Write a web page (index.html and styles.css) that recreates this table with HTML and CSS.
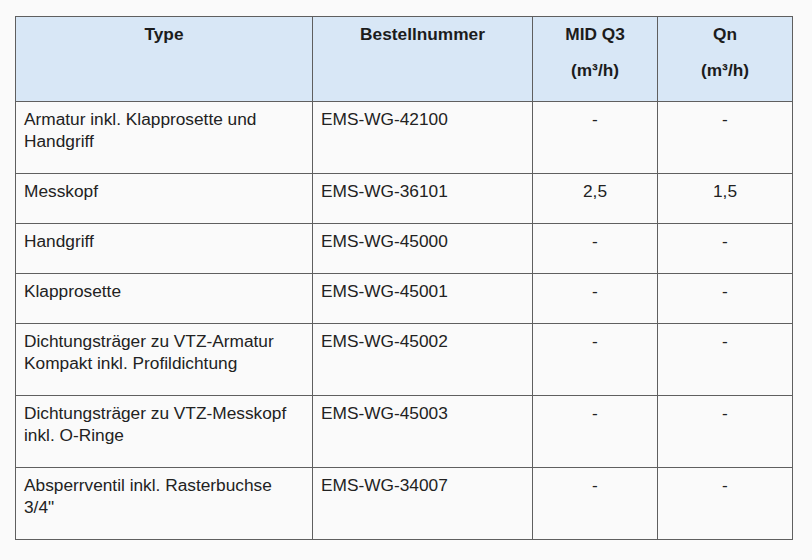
FILE: index.html
```html
<!DOCTYPE html>
<html lang="de">
<head>
<meta charset="utf-8">
<title>Ersatzteile</title>
<link rel="stylesheet" href="styles.css">
</head>
<body>
<table class="parts">
  <colgroup>
    <col class="c-type">
    <col class="c-nr">
    <col class="c-q3">
    <col class="c-qn">
  </colgroup>
  <thead>
    <tr>
      <th><p>Type</p></th>
      <th><p>Bestellnummer</p></th>
      <th><p>MID Q3</p><p>(m³/h)</p></th>
      <th><p>Qn</p><p>(m³/h)</p></th>
    </tr>
  </thead>
  <tbody>
    <tr>
      <td><p>Armatur inkl. Klapprosette und Handgriff</p></td>
      <td><p>EMS-WG-42100</p></td>
      <td class="num"><p>-</p></td>
      <td class="num"><p>-</p></td>
    </tr>
    <tr>
      <td><p>Messkopf</p></td>
      <td><p>EMS-WG-36101</p></td>
      <td class="num"><p>2,5</p></td>
      <td class="num"><p>1,5</p></td>
    </tr>
    <tr>
      <td><p>Handgriff</p></td>
      <td><p>EMS-WG-45000</p></td>
      <td class="num"><p>-</p></td>
      <td class="num"><p>-</p></td>
    </tr>
    <tr>
      <td><p>Klapprosette</p></td>
      <td><p>EMS-WG-45001</p></td>
      <td class="num"><p>-</p></td>
      <td class="num"><p>-</p></td>
    </tr>
    <tr>
      <td><p>Dichtungsträger zu VTZ-Armatur Kompakt inkl. Profildichtung</p></td>
      <td><p>EMS-WG-45002</p></td>
      <td class="num"><p>-</p></td>
      <td class="num"><p>-</p></td>
    </tr>
    <tr>
      <td><p>Dichtungsträger zu VTZ-Messkopf inkl. O-Ringe</p></td>
      <td><p>EMS-WG-45003</p></td>
      <td class="num"><p>-</p></td>
      <td class="num"><p>-</p></td>
    </tr>
    <tr>
      <td><p>Absperrventil inkl. Rasterbuchse 3/4"</p></td>
      <td><p>EMS-WG-34007</p></td>
      <td class="num"><p>-</p></td>
      <td class="num"><p>-</p></td>
    </tr>
  </tbody>
</table>
</body>
</html>
```

FILE: styles.css
```css
html, body {
  margin: 0;
  padding: 0;
  background: #fafafa;
}

body {
  padding: 16px 0 0 15px;
  font-family: "Liberation Sans", Arial, sans-serif;
  font-size: 17.3px;
  line-height: 22px;
  color: #222;
}

.parts {
  border-collapse: collapse;
  table-layout: fixed;
  width: 777px;
}

.c-type { width: 297px; }
.c-nr { width: 220px; }
.c-q3 { width: 125px; }
.c-qn { width: 135px; }

.parts th,
.parts td {
  border: 1px solid #5f5f5f;
  padding: 6px 8px 6px 8px;
  vertical-align: top;
  text-align: left;
}

.parts th {
  background: #d8e7f6;
  text-align: center;
  font-weight: bold;
  color: #1c1c1c;
}

.parts th p {
  margin: 0 0 14px;
}

.parts td p {
  margin: 0 0 15px;
}

.parts td.num {
  text-align: center;
}
```
